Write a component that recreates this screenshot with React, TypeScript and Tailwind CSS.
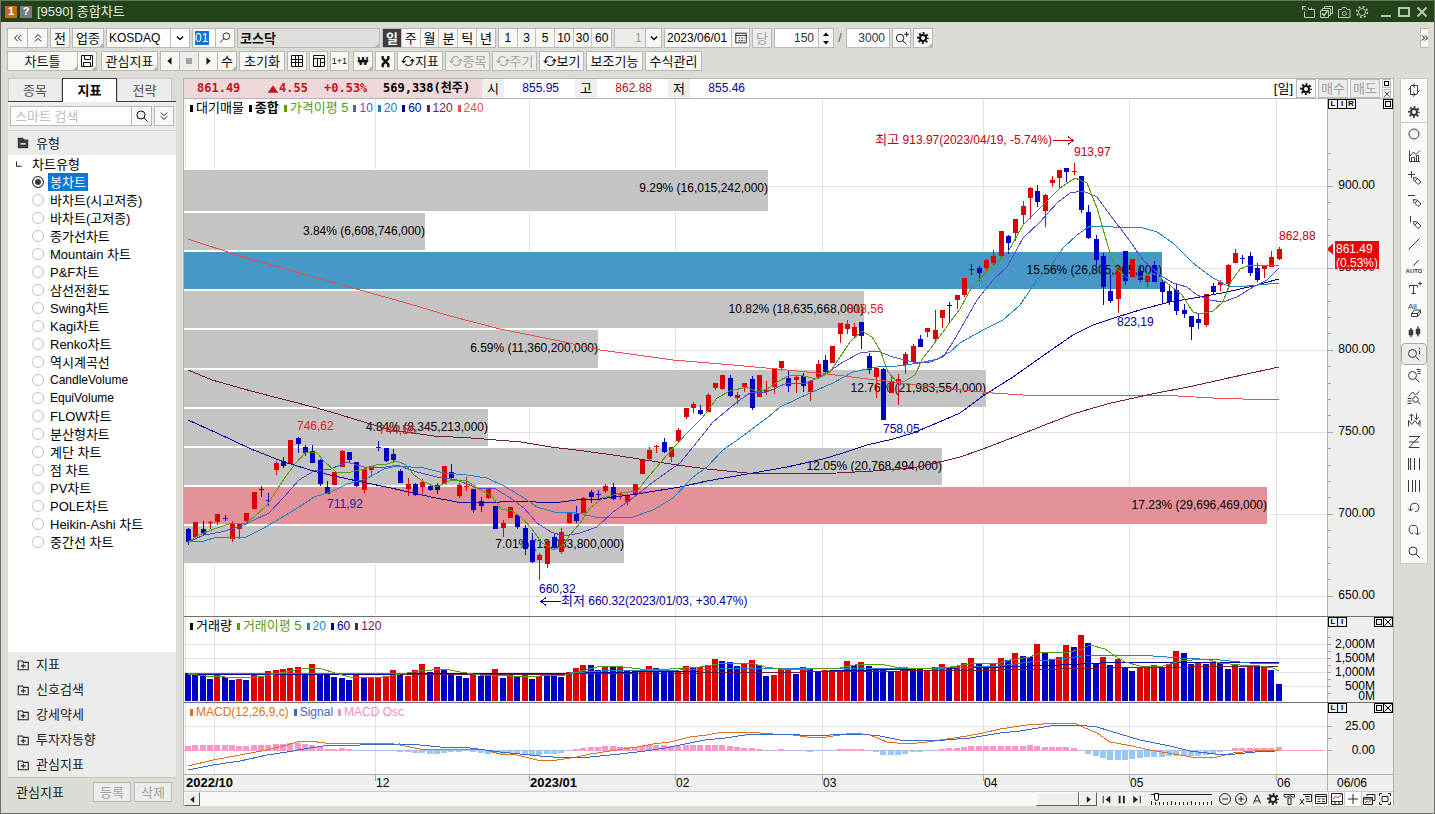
import { useState, type ReactNode } from "react";

type Candle = [up: number, high: number, top: number, bottom: number, low: number];

const RED = "#dc0000";
const BLUE = "#0000c4";

// Candles are kept in thirds of a pixel, counted from `base`.
const CANDLE_BLOCKS: { base: number; rows: Candle[] }[] = [
  {
    base: 380,
    rows: [
      [0, 444, 448, 487, 495], [1, 426, 426, 472, 472], [0, 424, 447, 462, 465], [1, 424, 427, 430, 446],
      [1, 402, 402, 426, 434], [0, 404, 413, 416, 424], [1, 424, 431, 477, 486], [1, 430, 432, 446, 476],
      [1, 398, 399, 422, 428], [1, 336, 336, 387, 387], [0, 318, 327, 330, 350], [0, 340, 360, 363, 378],
      [1, 243, 249, 269, 284], [0, 232, 243, 257, 263], [1, 180, 180, 252, 252], [0, 170, 174, 192, 218],
      [0, 195, 201, 219, 228], [0, 195, 213, 248, 248], [0, 236, 240, 312, 318], [0, 304, 320, 343, 343],
      [1, 277, 277, 315, 315], [1, 210, 213, 260, 260], [0, 216, 216, 240, 248], [0, 246, 246, 318, 322],
      [1, 266, 266, 330, 340], [1, 257, 257, 271, 290], [0, 183, 200, 203, 212], [0, 205, 205, 243, 246],
      [0, 208, 222, 240, 250], [0, 268, 273, 308, 308], [1, 293, 312, 327, 347], [0, 308, 312, 345, 348],
      [1, 298, 307, 320, 342], [0, 312, 319, 330, 333], [0, 308, 315, 330, 342], [1, 258, 258, 313, 313],
      [0, 252, 275, 293, 299], [1, 308, 315, 347, 353], [1, 291, 317, 320, 332], [0, 327, 327, 389, 400],
      [0, 352, 362, 378, 396], [1, 327, 327, 353, 356], [0, 378, 378, 447, 447], [1, 420, 429, 444, 472],
      [1, 380, 380, 415, 415], [0, 402, 406, 441, 448], [0, 436, 444, 506, 524], [0, 459, 480, 546, 549],
      [1, 518, 524, 541, 600], [1, 482, 484, 552, 563], [0, 458, 471, 504, 510], [1, 445, 457, 515, 522],
      [1, 396, 396, 429, 432], [0, 378, 402, 423, 428],
    ],
  },
  {
    base: 300,
    rows: [
      [1, 592, 595, 638, 638], [0, 571, 576, 590, 608], [0, 570, 582, 585, 600], [1, 552, 558, 573, 578],
      [0, 549, 561, 596, 600], [1, 575, 583, 586, 600], [1, 582, 585, 605, 615], [1, 552, 552, 583, 583],
      [1, 480, 480, 522, 522], [1, 440, 450, 476, 480], [1, 434, 438, 441, 458], [0, 414, 426, 456, 460],
      [1, 441, 441, 470, 486], [1, 384, 390, 422, 428], [1, 324, 324, 351, 357], [1, 306, 312, 323, 340],
      [0, 316, 330, 342, 346], [1, 279, 285, 335, 335], [1, 248, 250, 263, 270], [1, 225, 225, 267, 271],
      [0, 224, 234, 288, 291], [1, 276, 285, 293, 311], [1, 248, 250, 262, 276], [0, 228, 237, 323, 330],
      [1, 225, 225, 290, 290], [1, 244, 271, 275, 286], [1, 205, 205, 262, 282], [1, 183, 183, 204, 214],
      [0, 213, 234, 258, 277], [1, 228, 230, 240, 280], [0, 218, 228, 257, 277], [1, 240, 243, 275, 302],
      [1, 180, 192, 230, 230], [0, 165, 180, 215, 218], [1, 138, 138, 188, 188], [1, 68, 70, 101, 130],
      [1, 60, 72, 86, 102], [1, 68, 81, 107, 117], [0, 66, 66, 107, 147], [0, 158, 168, 209, 222],
      [1, 200, 204, 230, 294], [0, 203, 206, 359, 359], [1, 225, 244, 279, 279], [1, 222, 237, 250, 316],
      [1, 155, 162, 196, 222], [1, 132, 138, 185, 192], [0, 105, 117, 140, 140], [1, 84, 85, 97, 112],
      [1, 30, 90, 117, 122], [1, 30, 30, 54, 84], [0, 6, 14, 17, 66],
    ],
  },
  {
    base: 120,
    rows: [
      [1, 525, 525, 539, 567], [1, 474, 474, 525, 532], [0, 432, 446, 449, 465], [0, 438, 444, 459, 483],
      [1, 417, 420, 444, 458], [1, 390, 408, 429, 435], [1, 333, 333, 408, 415], [0, 345, 348, 369, 402],
      [1, 297, 297, 338, 364], [1, 242, 258, 284, 311], [1, 201, 204, 233, 298], [0, 195, 213, 245, 260],
      [1, 222, 225, 272, 320], [1, 167, 180, 188, 200], [1, 150, 150, 174, 204], [0, 144, 144, 156, 186],
      [1, 129, 152, 155, 164], [0, 168, 168, 270, 278], [0, 255, 276, 353, 356], [0, 345, 357, 420, 434],
      [0, 400, 408, 500, 555], [0, 462, 513, 543, 549], [1, 440, 444, 536, 578], [0, 393, 393, 482, 496],
      [1, 417, 417, 471, 471], [0, 440, 453, 480, 486], [1, 460, 468, 486, 500], [0, 423, 436, 486, 486],
      [0, 478, 486, 516, 551], [0, 497, 513, 547, 555], [0, 490, 510, 572, 584], [0, 552, 570, 581, 594],
      [0, 588, 588, 621, 660], [0, 582, 597, 608, 627], [1, 522, 522, 614, 620], [0, 488, 498, 516, 525],
      [1, 480, 487, 496, 512], [1, 432, 435, 492, 507], [1, 387, 399, 428, 428], [0, 405, 414, 418, 432],
      [0, 396, 408, 458, 467], [0, 430, 444, 479, 486], [1, 436, 438, 446, 474], [1, 393, 411, 440, 440],
      [1, 381, 387, 416, 420],
    ],
  },
];

const candles = CANDLE_BLOCKS.flatMap(({ base, rows }) =>
  rows.map(([up, ...ys]) => {
    const [high, top, bottom, low] = ys.map((v) => Math.round(base + v / 3));
    return { up: up === 1, high, top, bottom, low };
  }),
);

// negative = falling day
const VOLUME = [
  -28, -26, -26, -22, 27, -24, -21, 22, -21, 26, 25, 30, 31, 32, 33, 34, -28, 37, -26, -26, -24, -23, -21, 28, -23,
  23, 24, 25, 31, -28, 25, 31, 37, -29, 34, -31, -28, -25, -23, 27, -25, -25, 32, -23, 26, -24, 28, -22, 25, -25,
  -25, -24, 29, 33, 36, -36, -31, 35, -34, 34, -30, -30, 29, 35, -33, -31, -29, 30, 35, -33, 34, 36, 42, -40, -39,
  -35, 37, 41, -36, -25, 26, 32, 32, -27, 34, -33, -29, 31, 31, 31, 40, -36, 39, -35, -33, -32, -30, 30, 31, -32,
  -32, 31, 34, 37, -33, 35, 38, 43, -37, -34, 37, 43, -41, 48, -45, -44, 57, -49, -42, 44, 56, -54, 66, -58, -38,
  44, -36, 42, -33, -30, 33, 34, 36, -33, 37, 50, -48, -37, 38, -37, 39, -38, -32, 36, -33, 36, -35, 35, -31, -17,
];

const OSC = [
  4, 5, 5, 5, 5, 5, 5, 4, 4, 5, 5, 5, 6, 6, 7, 7, 6, 5, 3, 1, 1, 2, 1, 0, 0,
  0, 0, 0, 0, -2, -2, -3, -3, -4, -4, -3, -2, -2, -1, -2, -3, -4, -3, -4, -3, -4, -4, -5, -5, -4,
  -4, -3, 0, 1, 2, 3, 3, 4, 4, 3, 3, 3, 4, 5, 5, 5, 4, 4, 5, 5, 5, 5, 5, 5, 4,
  3, 2, 2, 1, 0, 0, 1, 0, -1, -1, -2, -1, -1, -1, 1, 1, 1, 1, -1, -2, -5, -5, -5, -4, -2,
  -2, -1, 0, 1, 2, 2, 3, 4, 4, 4, 4, 4, 4, 4, 4, 5, 4, 3, 3, 3, 3, 2, 0, -4, -6,
  -8, -10, -10, -10, -9, -8, -7, -7, -7, -6, -6, -6, -6, -6, -5, -4, -2, 0, 2, 2, 2, 2, 2, 2, 3,
];

const PRICE_LINES = [
  { color: "#e85050", points: "188,239 240,256 300,273 360,290 410,304 450,316 500,329 560,341 600,350 623,353 673,360 733,365 787,370 827,374 860,378 893,382 943,388 993,393 1023,395 1113,395 1160,395 1213,398 1243,399 1279,399" },
  { color: "#701c40", points: "188,370 212,380 251,391 317,408 341,415 377,426 391,430 434,436 471,438 521,442 551,447 584,451 620,456 677,465 707,469 747,473 793,474 837,473 873,471 913,468 940,462 960,457 983,449 1027,432 1073,414 1107,404 1147,395 1193,386 1233,377 1279,367" },
  { color: "#0000a0", points: "188,420 217,433 251,449 284,462 317,472 357,481 391,488 431,497 457,502 484,503 517,501 554,503 584,499 600,499 637,494 680,487 707,481 753,473 787,467 823,459 843,453 867,445 893,439 913,433 937,423 960,413 983,396 1013,377 1047,353 1073,335 1093,325 1117,317 1143,309 1170,302 1200,297 1227,292 1253,286 1279,279" },
  { color: "#2080c8", points: "188,542 204,541 217,537 246,537 262,529 281,518 299,507 314,497 331,492 347,484 366,479 384,469 397,466 424,468 444,473 467,475 487,478 504,486 521,496 537,507 554,512 577,513 600,518 633,517 653,510 673,498 693,477 707,467 723,450 747,433 767,418 780,407 810,393 833,383 853,372 877,367 897,366 920,363 937,359 950,352 960,343 983,330 1003,320 1020,305 1037,280 1050,267 1063,248 1077,235 1090,226 1113,227 1140,227 1157,232 1173,243 1193,263 1213,278 1230,287 1247,286 1279,283" },
  { color: "#5a48d8", points: "188,542 204,535 221,532 239,527 254,520 269,513 284,497 299,480 314,471 331,469 347,462 364,467 381,468 397,465 417,472 437,477 457,480 477,488 494,488 509,497 524,508 537,523 551,532 564,536 580,533 597,527 613,512 633,498 653,482 680,463 693,447 713,422 737,402 750,393 767,392 787,383 807,383 827,373 843,362 860,353 877,351 893,357 913,362 930,362 943,357 953,342 977,300 993,280 1007,267 1023,238 1040,222 1057,203 1070,193 1083,191 1097,197 1110,215 1127,237 1143,260 1160,275 1173,283 1187,287 1197,295 1210,300 1223,302 1237,297 1253,287 1267,280 1279,268" },
  { color: "#559c10", points: "188,542 199,535 214,529 232,523 246,523 254,517 267,505 284,479 296,463 306,452 317,453 324,461 336,472 351,472 364,469 376,465 387,464 397,461 406,465 414,475 424,482 437,487 451,480 467,481 479,489 492,496 501,509 512,511 521,517 532,529 542,543 554,550 562,546 570,535 580,523 590,508 603,498 620,493 637,491 650,475 667,455 687,433 703,417 717,398 730,391 747,387 757,392 767,389 777,382 790,375 803,376 817,379 830,372 840,357 850,342 862,331 872,337 880,350 888,372 897,382 905,381 915,375 923,358 937,340 948,325 960,309 973,285 992,267 1008,252 1023,225 1040,208 1060,188 1075,178 1087,183 1097,208 1107,243 1115,267 1127,278 1140,277 1153,273 1167,283 1182,295 1193,312 1200,314 1213,311 1223,302 1230,283 1240,269 1250,265 1267,265 1279,265" },
];

const VOLUME_LINES = [
  { color: "#701c40", points: "188,673 400,674 570,674 700,673 1000,670 1060,669 1100,668 1279,666" },
  { color: "#0000a0", points: "188,675 400,674 570,673 700,671 830,671 1000,667 1060,665 1100,663 1279,662" },
  { color: "#2080c8", points: "188,673 350,674 400,673 570,673 600,671 680,670 750,668 920,669 1000,666 1030,662 1060,659 1090,655 1140,655 1180,658 1220,660 1250,663 1279,664" },
  { color: "#559c10", points: "188,674 205,676 225,677 245,678 265,676 280,673 295,670 310,668 322,669 335,673 350,677 385,677 400,674 420,671 445,669 460,672 480,675 510,676 540,676 565,675 582,671 597,667 615,666 640,669 670,669 700,667 725,663 750,663 765,667 780,669 810,669 840,668 860,664 880,664 895,667 920,669 950,667 970,664 1000,663 1010,660 1030,657 1043,652 1065,653 1082,649 1090,645 1105,649 1115,656 1125,662 1140,666 1160,667 1180,661 1205,659 1220,663 1240,665 1260,666 1273,668 1279,671" },
];

const MACD_LINES = [
  { color: "#e07020", points: "188,766 213,760 240,755 267,750 287,745 297,742 310,741 325,743 347,743 367,744 387,743 400,745 420,749 443,749 470,749 485,750 500,754 517,755 537,760 557,760 577,757 590,754 610,751 637,747 653,744 670,742 690,737 707,735 723,732 747,732 773,734 793,735 807,737 827,737 840,735 853,733 870,735 887,742 907,744 927,742 947,739 967,736 983,733 1000,729 1027,725 1060,723 1077,724 1083,727 1097,733 1110,742 1127,745 1150,750 1180,755 1197,758 1217,757 1233,753 1253,751 1279,750" },
  { color: "#3868c8", points: "188,770 213,765 240,761 267,755 287,752 310,748 330,745 360,745 400,744 420,745 440,747 470,748 485,750 500,752 520,754 540,756 565,758 590,757 620,754 645,751 665,748 685,744 705,740 725,738 745,735 770,734 800,735 830,735 860,734 880,736 900,740 920,741 945,740 970,738 1000,733 1020,731 1050,726 1077,725 1097,727 1110,731 1140,740 1170,746 1190,751 1215,754 1235,754 1255,752 1275,751" },
];

const BANDS = [
  { y: 170, h: 41, right: 768, label: "9.29% (16,015,242,000)", fill: "#c4c4c4" },
  { y: 213, h: 37, right: 425, label: "3.84% (6,608,746,000)", fill: "#c4c4c4" },
  { y: 252, h: 37, right: 1162, label: "15.56% (26,805,205,000)", fill: "#4798c6" },
  { y: 291, h: 37, right: 864, label: "10.82% (18,635,668,000)", fill: "#c4c4c4" },
  { y: 330, h: 38, right: 598, label: "6.59% (11,360,200,000)", fill: "#c4c4c4" },
  { y: 370, h: 37, right: 986, label: "12.76% (21,983,554,000)", fill: "#c4c4c4" },
  { y: 409, h: 37, right: 488, label: "4.84% (8,345,213,000)", fill: "#c4c4c4" },
  { y: 448, h: 37, right: 942, label: "12.05% (20,768,494,000)", fill: "#c4c4c4" },
  { y: 487, h: 37, right: 1267, label: "17.23% (29,696,469,000)", fill: "#e49299" },
  { y: 526, h: 37, right: 624, label: "7.01% (12,083,800,000)", fill: "#c4c4c4" },
];

const PEAKS = [
  { x: 297, y: 430, text: "746,62", fill: "#e02020" },
  { x: 379, y: 434, text: "744,56", fill: "#e02020" },
  { x: 327, y: 508, text: "711,92", fill: "#2020c0" },
  { x: 539, y: 593, text: "660,32", fill: "#0000a0" },
  { x: 847, y: 313, text: "818,56", fill: "#e02020" },
  { x: 883, y: 433, text: "758,05", fill: "#0000a0" },
  { x: 1074, y: 156, text: "913,97", fill: "#c00010" },
  { x: 1117, y: 326, text: "823,19", fill: "#0000a0" },
  { x: 1279, y: 240, text: "862,88", fill: "#c00010" },
];

const MONTHS = [
  { x: 214, label: "" },
  { x: 375, label: "12" },
  { x: 529, label: "2023/01" },
  { x: 675, label: "02" },
  { x: 822, label: "03" },
  { x: 983, label: "04" },
  { x: 1129, label: "05" },
  { x: 1276, label: "06" },
];

const CHART_TYPES = [
  "봉차트", "바차트(시고저종)", "바차트(고저종)", "종가선차트", "Mountain 차트", "P&F차트", "삼선전환도",
  "Swing차트", "Kagi차트", "Renko차트", "역시계곡선", "CandleVolume", "EquiVolume", "FLOW차트",
  "분산형차트", "계단 차트", "점 차트", "PV차트", "POLE차트", "Heikin-Ashi 차트", "중간선 차트",
];

const barX = (i: number) => Math.floor(188.4 + 7.3215 * i);

function Icon({ children, size = 16, className = "" }: { children: ReactNode; size?: number; className?: string }) {
  return (
    <svg width={size} height={size} viewBox="0 0 16 16" fill="none" stroke="currentColor" className={`shrink-0 ${className}`} aria-hidden="true">
      {children}
    </svg>
  );
}

const gear = (
  <>
    <circle cx="8" cy="8" r="3" strokeWidth="2" />
    <circle cx="8" cy="8" r="4.9" strokeWidth="2" strokeDasharray="1.95 1.9" strokeDashoffset="1" />
  </>
);
const lens = (
  <>
    <circle cx="7" cy="7" r="4" />
    <path d="M9.8 9.8l4 4" />
  </>
);
const pencil = <path d="M7.5 7.5l3.5.5 4 4-3 2.5-4-4zM9 11l2.500-2.500" />;
const cycle = <path d="M3 10V7.5A4.5 4.5 0 0 1 11 4.500M13 6v2.500A4.5 4.5 0 0 1 5 11.500M.8 7.5L3 10l2.2-2.500M10.8 8.500L13 6l2.2 2.500" strokeWidth="1.2" />;
const smallLens = (
  <>
    <circle cx="6.5" cy="7.5" r="4" />
    <path d="M9.3 10.3l4 4" />
  </>
);

const TOOLS: { label: string; icon: ReactNode }[] = [
  { label: "새로고침", icon: <path d="M4.5 9.5V5a1.500 1.500 0 0 1 1.500-1.500h5.500V7M9 5.500L6.500 3.500 9 1.500M11.500 6.500V11a1.500 1.500 0 0 1-1.500 1.500H4.500V9M7 10.500l2.500 2L7 14.500M2.500 7.500l2-2M13.500 8.500l-2 2" /> },
  { label: "설정", icon: gear },
  { label: "원", icon: <circle cx="8" cy="8" r="5" /> },
  { label: "지표추가", icon: <path d="M3.5 2.5v11h10.5M4 8l3.5-4 2.5 2.5 4-4M5.5 13.5v-4h3v4M10.5 13.5v-6h2v6" /> },
  { label: "십자선", icon: <><path d="M2 4.5h7M5.5 1v7" />{pencil}</> },
  { label: "수평선", icon: <><path d="M2 3.5h7" />{pencil}</> },
  { label: "수직선", icon: <><path d="M4.5 2v6.5" />{pencil}</> },
  { label: "추세선", icon: <path d="M2.5 13.5l11-11" /> },
  { label: "자동추세선", icon: <><path d="M7.5 8l5-6" /><text x="8" y="15" fontSize="6" textAnchor="middle" fill="currentColor" stroke="none" fontWeight="bold">AUTO</text></> },
  { label: "문자", icon: <path d="M3.5 7.5v-2h8v2M7.5 5.5v8M5.5 13.5h4M12 3.500h4M14 1.5v4" /> },
  { label: "전체삭제", icon: <><text x="2" y="7" fontSize="8" fill="currentColor" stroke="none">All</text><path d="M5.5 11.5l3-3.5h6l-3 3.5zM5.5 11.5v3h6l3-3.5V8M11.5 11.5v3" /></> },
  { label: "봉모양", icon: <path d="M3.500 6.5h3v4h-3zM10.500 5.500h3v4h-3zM5 4v9M12 2.500v10" fill="currentColor" strokeWidth="1.5" /> },
  { label: "정보보기", icon: <>{smallLens}<path d="M13.5 4.5v4M13.5 2v1.2" /></> },
  { label: "목록보기", icon: <>{smallLens}<path d="M10.5 1.500h4M11.500 3.5h3M11.5 5.5h3" /></> },
  { label: "패턴검색", icon: <><path d="M2.5 6.500l4-4.500 3 3 4-3.5M1.5 8.500h4M1.5 11h4M1.5 13.5h4" /><circle cx="9.5" cy="9.5" r="2.8" /><path d="M11.5 11.5l3 2.5" /></> },
  { label: "신호", icon: <path d="M2.5 14.500V8.500l3.5 4 3-4 3 4 2-4v6M5.5 9V2M3.5 4l2-2 2 2M10.5 1.5v6M8.5 5.5l2 2 2-2" /> },
  { label: "지그재그", icon: <path d="M3 2.500h10.5L3 13.500h10.5M3 8h10" /> },
  { label: "피보나치", icon: <path d="M2.5 2v12M4.5 2v12M8.5 2v12M13.5 2v12" /> },
  { label: "등간격선", icon: <path d="M2.5 2v12M6.5 2v12M9.5 2v12M13.5 2v12" /> },
  { label: "되돌리기", icon: <path d="M4.5 11V7.500a4.200 4.200 0 1 1 4.500 4.200M2 8.500l2.500 2.500L7 8.500" /> },
  { label: "다시실행", icon: <path d="M11.5 12.500V7.500a4.200 4.200 0 1 0-4.500 4.200M9 10.500l2.500 2.500 2.500-2.500" /> },
  { label: "확대", icon: lens },
];

const BOTTOM_TOOLS: { label: string; icon: ReactNode; framed?: boolean }[] = [
  { label: "축소", icon: <><circle cx="8" cy="8" r="5.5" /><path d="M5 8h6" /></> },
  { label: "확대", icon: <><circle cx="8" cy="8" r="5.5" /><path d="M5 8h6M8 5v6" /></> },
  { label: "글자", icon: <path d="M4.5 12.500L8 4l3.5 8.500M5.5 10h5" /> },
  { label: "설정", icon: gear },
  { label: "도구", icon: <path d="M3 3.5h10.5V6h-2L10 5H8L5 6.5 3 5zM7 7h3v6.5H7z" /> },
  { label: "자료저장", icon: <path d="M6 3.5h8.5v7H9M3 8l4 5.5M7 8l-4 5.5M8 5.5h4.5M9 8h3.5" /> },
  { label: "표", icon: <path d="M2.5 3.5h11v9h-11zM2.5 5.5h11M4.5 8h3M4.5 10.5h3M9 8h3M9 10.5h3" />, framed: true },
  { label: "미니차트", icon: <><path d="M2.5 2.500h11v11h-11zM2.500 10.500h11M6 10.500v3M10 10.500v3" /><path d="M4 8l2.500-3 2 2 4-3.500" stroke="#c03030" /></>, framed: true },
  { label: "십자", icon: <path d="M8 3v10M3 8h10" />, framed: true },
  { label: "복사", icon: <><path d="M6 5V3.500h8v6h-2M2.500 6.500h9v7h-9zM2.500 8h9" /><path d="M4 12l2-2 1.500 1.500 2.500-2.500" stroke="#c03030" /></> },
  { label: "전체화면", icon: <path d="M5 5.500h6v5H5zM2.500 5V2.500H5M11 2.500h2.500V5M13.500 11v2.500H11M5 13.500H2.500V11" /> },
];

type BtnProps = { children?: ReactNode; label?: string; className?: string; more?: boolean; off?: boolean };

function Btn({ children, label, className = "", more, off }: BtnProps) {
  return (
    <button
      type="button"
      aria-label={label}
      disabled={off}
      className={`relative flex h-5 shrink-0 items-center justify-center whitespace-nowrap border border-[#b9b9b6] text-[13px] leading-none ${off ? "bg-[#ececea] text-[#a2a2a2]" : "bg-[#f7f7f6] text-[#111]"} ${className}`}
    >
      {children}
      {more && <span className="absolute bottom-0 right-0 border-2 border-b-[#b4b4b4] border-l-transparent border-r-[#b4b4b4] border-t-transparent" />}
    </button>
  );
}

function Chevron() {
  return (
    <Icon size={10}>
      <path d="M3 5.5l5 5 5-5" strokeWidth="2" />
    </Icon>
  );
}

function TitleBar() {
  return (
    <header className="flex h-[22px] items-center border-t border-[#5f7a58] bg-[#23441b] px-1 text-[#e8ece6]">
      <span className="flex size-3 items-center justify-center bg-[#c86a10] text-[11px] font-bold leading-none text-white">1</span>
      <span className="ml-[3px] flex size-3 items-center justify-center bg-[#7c7c7c] text-[11px] font-bold leading-none text-white">?</span>
      <h1 className="ml-[5px] text-[13px] leading-none">[9590] 종합차트</h1>
      <div className="ml-auto flex items-center gap-0.5 text-[#b9c6b2]">
        <button type="button" aria-label="창 분리"><Icon><path d="M4.500 7.500v6h10v-8h-6M8.500 3.500v2M11.500 5.500v-2M2 2.500l4 4M2.500 6V2.500H6" /></Icon></button>
        <button type="button" aria-label="창 복제"><Icon><path d="M2.5 6.5h8v7h-8zM4.500 6.500v-2h8v7h-2M6.500 4.500v-2h8v7h-2" /><path d="M4 9l2 2.500L9.500 7" strokeWidth="1.500" /></Icon></button>
        <button type="button" aria-label="화면 캡처"><Icon><path d="M2.500 5.500h3l1-2H10l1 2h3v8H2.500z" /><circle cx="8.300" cy="9.500" r="2" /></Icon></button>
        <button type="button" aria-label="설정"><Icon><circle cx="8" cy="8" r="3.5" /><circle cx="8" cy="8" r="5.3" strokeWidth="1.8" strokeDasharray="1.9 2.26" /></Icon></button>
        <button type="button" aria-label="최소화" className="ml-1.5"><Icon><path d="M3 12h10" strokeWidth="2" /></Icon></button>
        <button type="button" aria-label="최대화"><Icon><path d="M3 4h10v8H3z" strokeWidth="2" /></Icon></button>
        <button type="button" aria-label="닫기"><Icon><path d="M3.5 3.5l9 9M12.5 3.5l-9 9" strokeWidth="2" /></Icon></button>
      </div>
    </header>
  );
}

function Toolbar() {
  const [period, setPeriod] = useState("일");
  return (
    <div className="flex flex-col gap-[3px] pl-1.5 pt-1.5">
      <div className="flex gap-0.5">
        <div className="flex">
          <Btn label="처음" className="w-[21px]"><Icon size={10}><path d="M7.5 3l-5 5 5 5M13.5 3l-5 5 5 5" strokeWidth="1.5" /></Icon></Btn>
          <Btn label="접기" className="w-5 border-l-0"><Icon size={10}><path d="M3 7.5l5-5 5 5M3 13.5l5-5 5 5" strokeWidth="1.5" /></Icon></Btn>
        </div>
        <Btn className="w-5">전</Btn>
        <Btn className="w-8" more>업종</Btn>
        <div className="relative flex h-5 w-[84px] shrink-0 border border-[#b9b9b6] bg-white">
          <select aria-label="시장" className="w-full appearance-none bg-white pl-0.5 text-xs outline-none">
            <option>KOSDAQ</option>
          </select>
          <span className="pointer-events-none absolute inset-y-0 right-0 flex w-[19px] items-center justify-center border-l border-[#b9b9b6]"><Chevron /></span>
        </div>
        <div className="flex">
          <div className="flex h-5 w-6 items-center border border-[#b9b9b6] bg-white pl-0.5">
            <input aria-label="업종코드" defaultValue="01" className="h-3.5 w-3.5 bg-[#0a74d0] text-xs leading-none text-white outline-none" />
          </div>
          <Btn label="코드 검색" className="w-[19px] border-l-0"><Icon size={14}><circle cx="9.5" cy="6" r="3.8" /><path d="M6.8 8.7L2.5 13" /></Icon></Btn>
        </div>
        <Btn className="w-[143px] justify-start! bg-[#dfdedb]! pl-0.5 font-bold" more>코스닥</Btn>
        <div className="flex h-5 w-[114px] shrink-0 divide-x divide-[#c4c4c2] border border-[#b9b9b6] bg-[#f7f7f6] text-[13px] leading-none">
          {["일", "주", "월", "분", "틱", "년"].map((p) => (
            <button key={p} type="button" onClick={() => setPeriod(p)} className={p === period ? "flex-1 bg-[#3e3e3e] font-bold text-white" : "flex-1"}>
              {p}
            </button>
          ))}
        </div>
        <div className="flex h-5 w-[114px] shrink-0 divide-x divide-[#c4c4c2] border border-[#b9b9b6] bg-[#f7f7f6] text-xs leading-none">
          {["1", "3", "5", "10", "30", "60"].map((n) => (
            <button key={n} type="button" className="w-[19px] grow">{n}</button>
          ))}
        </div>
        <div className="relative flex h-5 w-12 shrink-0 border border-[#b9b9b6] bg-[#ececea]">
          <select aria-label="분 단위" className="w-full appearance-none bg-transparent pl-5 text-xs text-[#999] outline-none">
            <option>1</option>
          </select>
          <span className="pointer-events-none absolute inset-y-0 right-0 flex w-4 items-center justify-center border-l border-[#b9b9b6] bg-[#f7f7f6]"><Chevron /></span>
        </div>
        <div className="flex">
          <input aria-label="기준일" defaultValue="2023/06/01" className="h-5 w-[68px] border border-[#b9b9b6] bg-white pl-0.5 text-xs outline-none" />
          <Btn label="달력" className="w-[18px] border-l-0"><Icon size={14}><path d="M2 2.5h12v11H2zM2 5h12M5 8h2M8 8h2M11 8h1M5 11h2M8 11h2M11 11h1" /></Icon></Btn>
        </div>
        <Btn className="w-5" off>당</Btn>
        <div className="flex">
          <input aria-label="표시 봉수" defaultValue="150" className="h-5 w-[45px] border border-[#b9b9b6] bg-white pr-1 text-right text-xs text-[#333] outline-none" />
          <div className="flex h-5 w-[15px] flex-col border border-l-0 border-[#b9b9b6] bg-[#f7f7f6]">
            <button type="button" aria-label="늘리기" className="flex flex-1 items-center justify-center"><Icon size={8}><path d="M2 12h12L8 5z" fill="currentColor" stroke="none" /></Icon></button>
            <button type="button" aria-label="줄이기" className="flex flex-1 items-center justify-center"><Icon size={8}><path d="M2 4h12l-6 7z" fill="currentColor" stroke="none" /></Icon></button>
          </div>
        </div>
        <span className="w-2 text-center text-xs leading-5 text-[#555]">/</span>
        <input aria-label="전체 봉수" defaultValue="3000" className="h-5 w-11 border border-[#b9b9b6] bg-white pr-1 text-right text-xs text-[#333] outline-none" />
        <Btn label="확대" className="w-[19px]"><Icon size={15}>{smallLens}<path d="M11 3.5h5M13.5 1v5" /></Icon></Btn>
        <Btn label="환경설정" className="w-5" more><Icon>{gear}</Icon></Btn>
        <button type="button" aria-label="더보기" className="ml-auto mr-1.5 flex h-5 w-2 items-center justify-center border-y border-l border-[#b9b9b6] bg-[#f7f7f6]">
          <Icon size={8}><path d="M2 3l5 5-5 5M8 3l5 5-5 5" strokeWidth="2" /></Icon>
        </button>
      </div>
      <div className="flex gap-0.5">
        <div className="mr-0.5 flex">
          <Btn className="w-[71px]" more>차트틀</Btn>
          <Btn label="저장" className="w-[19px] border-l-0" more><Icon><path d="M2.5 2.5h11v11h-11zM5.5 2.5v4h6v-4M4.5 13.5v-4h7v4" /></Icon></Btn>
        </div>
        <Btn className="w-[57px]" more>관심지표</Btn>
        <div className="flex">
          <Btn label="이전" className="w-5"><Icon size={12}><path d="M10 3v10L4.5 8z" fill="currentColor" stroke="none" /></Icon></Btn>
          <Btn label="정지" className="w-[19px] border-l-0" off><Icon size={12}><path d="M4 4h8v8H4z" fill="currentColor" stroke="none" /></Icon></Btn>
          <Btn label="다음" className="w-[19px] border-l-0"><Icon size={12}><path d="M6 3v10l5.5-5z" fill="currentColor" stroke="none" /></Icon></Btn>
          <Btn className="w-[19px] border-l-0" more>수</Btn>
        </div>
        <Btn className="w-[46px]">초기화</Btn>
        <Btn label="격자" className="w-5"><Icon><path d="M2.5 2.5h11v11h-11zM2.5 6.5h11M2.5 9.5h11M6.5 2.5v11M9.5 2.5v11" /></Icon></Btn>
        <Btn label="배치" className="w-[19px]"><Icon><path d="M2.5 2.5h11v11h-11zM2.5 5.5h11M6.5 5.5v8M9.5 5.5v8M9.5 9.5h4" /></Icon></Btn>
        <Btn className="w-[19px] text-[9px]!">1+1</Btn>
        <Btn label="원화" className="ml-0.5 w-5" more><span className="text-[11px] font-bold">₩</span></Btn>
        <Btn label="도구" className="w-5"><Icon size={15}><path d="M5 2v3l6 6v3M11 2v3L5 11v3" strokeWidth="2.5" /></Icon></Btn>
        <Btn className="w-[46px]"><Icon size={14}>{cycle}</Icon>지표</Btn>
        <Btn className="w-[45px]" off><Icon size={14}>{cycle}</Icon>종목</Btn>
        <Btn className="w-[45px]" off><Icon size={14}>{cycle}</Icon>주기</Btn>
        <Btn className="w-[45px]"><Icon size={14}>{cycle}</Icon>보기</Btn>
        <Btn className="w-[57px]">보조기능</Btn>
        <Btn className="w-[57px]">수식관리</Btn>
      </div>
    </div>
  );
}

function Sidebar() {
  const [selected, setSelected] = useState("봉차트");
  return (
    <aside className="flex w-[168px] shrink-0 flex-col bg-white">
      <div className="flex h-6 shrink-0 border-b border-[#3c3c3c] bg-[#dcdbd6] text-[13px] leading-none text-[#555]">
        <button type="button" className="w-[54px] border border-b-0 border-[#c8c8c6] bg-[#ececec]">종목</button>
        <button type="button" className="-mb-px w-[55px] border border-b-0 border-[#3c3c3c] bg-white font-bold text-black">지표</button>
        <button type="button" className="w-[55px] border border-b-0 border-[#c8c8c6] bg-[#ececec]">전략</button>
      </div>
      <div className="flex h-7 shrink-0 items-center gap-0.5 bg-[#ececea] px-0.5">
        <div className="flex">
          <input aria-label="스마트 검색" placeholder="스마트 검색" className="h-5 w-[122px] border border-[#b9b9b6] bg-white pl-1 text-[13px] outline-none placeholder:text-[#bdbdbd]" />
          <Btn label="검색" className="w-5 border-l-0"><Icon>{lens}</Icon></Btn>
        </div>
        <Btn label="펼치기" className="w-5"><Icon size={10}><path d="M3 2.5l5 5 5-5M3 8.5l5 5 5-5" strokeWidth="1.5" /></Icon></Btn>
      </div>
      <button type="button" className="flex h-[25px] shrink-0 items-center border-t border-[#d0d0ce] bg-[#ebebeb] pl-2 text-[13px] leading-none text-[#222]">
        <Icon size={14} className="text-[#3c3c3c]"><path d="M2 2h6l1.5 2H14v10H2z" fill="currentColor" stroke="none" /><path d="M5 9h6" stroke="white" strokeWidth="1.5" /></Icon>
        <span className="ml-1.5">유형</span>
      </button>
      <fieldset className="min-h-0 flex-1 overflow-hidden">
        <legend className="flex h-[18px] items-center pl-2 text-[13px] leading-none">
          <Icon size={6} className="mr-2.5"><path d="M1 1v13h14" strokeWidth="2.5" /></Icon>
          차트유형
        </legend>
        {CHART_TYPES.map((name) => (
          <label key={name} className="flex h-[18px] items-center pl-6 leading-none">
            <input
              type="radio"
              name="chart-type"
              checked={selected === name}
              onChange={() => setSelected(name)}
              className="size-3 appearance-none rounded-full border border-[#c2c2c2] bg-white checked:border-[#3a3a3a] checked:bg-[#3a3a3a] checked:shadow-[inset_0_0_0_2px_white]"
            />
            <span
              className={[
                "ml-1 flex h-[18px] items-center whitespace-nowrap px-0.5",
                /^[A-Za-z]+$/.test(name) ? "text-xs" : "text-[13px]",
                selected === name ? "bg-[#0078d7] text-white" : "text-black",
              ].join(" ")}
            >
              {name}
            </span>
          </label>
        ))}
      </fieldset>
      <div className="shrink-0 bg-[#ebebeb]">
        {["지표", "신호검색", "강세약세", "투자자동향", "관심지표"].map((name) => (
          <button key={name} type="button" className="flex h-[25px] w-full items-center pl-2 text-[13px] leading-none text-[#222]">
            <Icon size={14}><path d="M2.5 3.5h5l1 1.5h5.500v8.500H2.500zM5.500 9h5.500M8.200 6.300v5.500" strokeWidth="1.2" /></Icon>
            <span className="ml-1.5">{name}</span>
          </button>
        ))}
      </div>
      <div className="flex h-[29px] shrink-0 items-center gap-[3px] border-t border-[#c4c4c0] bg-[#dcdbd6] pl-2 pr-1">
        <span className="mr-auto text-[13px] leading-none text-[#222]">관심지표</span>
        <Btn className="w-[38px]" off>등록</Btn>
        <Btn className="w-[38px]" off>삭제</Btn>
      </div>
    </aside>
  );
}

function Legend({ items }: { items: { text: string; color: string; bold?: boolean }[] }) {
  return (
    <div className="absolute left-1.5 top-px flex gap-[5px] leading-4">
      {items.map((it) => (
        <span
          key={it.text}
          className={`flex items-center gap-[3px] whitespace-nowrap ${/[가-힣]/.test(it.text) ? "text-[13px]" : "text-xs"} ${it.bold ? "font-bold" : ""}`}
          style={{ color: it.color }}
        >
          <i className="h-[7px] w-[3px] bg-current" />
          {it.text}
        </span>
      ))}
    </div>
  );
}

function MiniBoxes({ items }: { items: string[] }) {
  return (
    <div className="flex">
      {items.map((t) => (
        <button key={t} type="button" aria-label={t} className="-ml-px flex h-2.5 w-2.5 items-center justify-center border border-black bg-[#f0f0f0] text-[8px] font-bold leading-none first:ml-0">
          {t === "□" ? <i className="size-1.5 border border-black" /> : t === "×" ? <Icon size={8}><path d="M1 1l14 14M15 1L1 15" strokeWidth="2" /></Icon> : t}
        </button>
      ))}
    </div>
  );
}

function PaneAxis({ left, right, children }: { left: string[]; right: string[]; children: ReactNode }) {
  return (
    <div className="relative w-[66px] shrink-0 border-l border-[#b0b0b0] bg-[#efefef]">
      {children}
      <div className="absolute inset-x-0 top-0 flex justify-between">
        <MiniBoxes items={left} />
        <MiniBoxes items={right} />
      </div>
    </div>
  );
}

function MonthGrid({ y1, y2 }: { y1: number; y2: number }) {
  return (
    <g stroke="#e2e2e2">
      <path d={`M185.5 ${y1}V${y2}`} />
      {MONTHS.map((m) => (
        <path key={m.x} d={`M${m.x + 0.5} ${y1}V${y2}`} />
      ))}
    </g>
  );
}

function Lines({ lines }: { lines: { color: string; points: string }[] }) {
  return lines.map((l) => <polyline key={l.color} points={l.points} fill="none" stroke={l.color} />);
}

function PricePane() {
  return (
    <div className="flex min-h-0 flex-1">
      <div className="relative min-w-0 flex-1 bg-white">
        <svg className="block size-full" fontSize="12" role="img" aria-label="코스닥 일봉 차트">
          <g transform="translate(-184 -99)" shapeRendering="crispEdges">
            <MonthGrid y1={99} y2={614} />
            {[186, 268, 350, 432, 514, 596].map((y) => (
              <path key={y} d={`M184 ${y}.5H1327`} stroke="#e2e2e2" />
            ))}
            {BANDS.map((b) => (
              <g key={b.y}>
                <rect x="184" y={b.y - 1} width={b.right - 183} height={b.h + 2} fill="white" />
                <rect x="184" y={b.y} width={b.right - 184} height={b.h} fill={b.fill} />
                <text x={b.right} y={b.y + 22} textAnchor="end">{b.label}</text>
              </g>
            ))}
            {candles.map((c, i) => {
              const x = barX(i);
              return (
                <g key={i} fill={c.up ? RED : BLUE}>
                  <rect x={x} y={c.high} width="1" height={Math.max(1, c.low - c.high)} />
                  <rect x={x - 2} y={c.top} width="5" height={Math.max(1, c.bottom - c.top)} />
                </g>
              );
            })}
            <Lines lines={PRICE_LINES} />
            {PEAKS.map((p) => (
              <text key={p.text} x={p.x} y={p.y} fill={p.fill}>{p.text}</text>
            ))}
            <text x="1052" y="144" textAnchor="end" fill="#c00010"><tspan fontSize="13">최고</tspan> 913.97(2023/04/19, -5.74%)</text>
            <path d="M1053 140.5h20M1068 136.5l5 4-5 4" fill="none" stroke="#c00010" />
            <text x="561" y="605" fill="#0000a0"><tspan fontSize="13">최저</tspan> 660.32(2023/01/03, +30.47%)</text>
            <path d="M561 601.5h-20M546 597.5l-5 4 5 4" fill="none" stroke="#0000a0" />
          </g>
        </svg>
        <Legend
          items={[
            { text: "대기매물", color: "#000" },
            { text: "종합", color: "#000", bold: true },
            { text: "가격이평 5", color: "#559c10" },
            { text: "10", color: "#6050d8" },
            { text: "20", color: "#2080c8" },
            { text: "60", color: "#0000a0" },
            { text: "120", color: "#701c40" },
            { text: "240", color: "#e85050" },
          ]}
        />
      </div>
      <PaneAxis left={["L", "I", "R"]} right={["□"]}>
        <svg className="block size-full" fontSize="12">
          <g transform="translate(-1328 -99)">
            {Array.from({ length: 28 }, (_, k) => Math.round(153 + k * 16.4)).map((y, k) => (
              <path key={y} d={`M1328 ${y}.5h${k % 5 === 2 ? 5 : 3}`} stroke="#a8a8a8" />
            ))}
            {["900.00", "850.00", "800.00", "750.00", "700.00", "650.00"].map((t, k) => (
              <text key={t} x="1375" y={189 + k * 82} textAnchor="end">{t}</text>
            ))}
            <path d="M1333 243.5v11l-6-5.5zM1335 241h44v28h-44z" fill="#f00000" />
            <text x="1336" y="253" fill="white">861.49</text>
            <text x="1336" y="267" fill="white">(0.53%)</text>
          </g>
        </svg>
      </PaneAxis>
    </div>
  );
}

function VolumePane() {
  return (
    <div className="flex h-[86px] shrink-0 border-t border-[#707070]">
      <div className="relative min-w-0 flex-1 bg-white">
        <svg className="block size-full" role="img" aria-label="거래량">
          <g transform="translate(-184 -617)" shapeRendering="crispEdges">
            <MonthGrid y1={617} y2={702} />
            {[644, 658, 672, 686].map((y) => (
              <path key={y} d={`M184 ${y}.5H1327`} stroke="#e2e2e2" />
            ))}
            {VOLUME.map((v, i) => (
              <rect key={i} x={barX(i) - 3} y={701 - Math.abs(v)} width="6" height={Math.abs(v)} fill={v > 0 ? RED : BLUE} />
            ))}
            <Lines lines={VOLUME_LINES} />
          </g>
        </svg>
        <Legend
          items={[
            { text: "거래량", color: "#000" },
            { text: "거래이평 5", color: "#559c10" },
            { text: "20", color: "#2080c8" },
            { text: "60", color: "#0000a0" },
            { text: "120", color: "#701c40" },
          ]}
        />
      </div>
      <PaneAxis left={["L", "I"]} right={["□", "×"]}>
        <svg className="block size-full" fontSize="12">
          <g transform="translate(-1328 -617)">
            {[637, 644, 651, 658, 665, 672, 679, 686, 693].map((y) => (
              <path key={y} d={`M1328 ${y}.5h3`} stroke="#a8a8a8" />
            ))}
            {[["2,000M", 648], ["1,500M", 662], ["1,000M", 676], ["500M", 690], ["0M", 700]].map(([t, y]) => (
              <text key={t} x="1375" y={y} textAnchor="end">{t}</text>
            ))}
          </g>
        </svg>
      </PaneAxis>
    </div>
  );
}

function MacdPane() {
  return (
    <div className="flex h-[72px] shrink-0 border-t border-[#707070]">
      <div className="relative min-w-0 flex-1 bg-white">
        <svg className="block size-full" role="img" aria-label="MACD">
          <g transform="translate(-184 -703)" shapeRendering="crispEdges">
            <MonthGrid y1={703} y2={774} />
            <path d="M184 726.5H1327" stroke="#e2e2e2" />
            <path d="M184 750.5H1325" stroke="#f8a0c8" />
            {OSC.map((v, i) => (
              <rect key={i} x={barX(i) - 3} y={v > 0 ? 750 - v : 750} width="6" height={Math.abs(v) || 1} fill={v > 0 ? "#f898c8" : "#98c8f8"} />
            ))}
            <Lines lines={MACD_LINES} />
          </g>
        </svg>
        <Legend
          items={[
            { text: "MACD(12,26,9,c)", color: "#e07020" },
            { text: "Signal", color: "#3868c8" },
            { text: "MACD Osc", color: "#f090c0" },
          ]}
        />
      </div>
      <PaneAxis left={["L", "I"]} right={["□", "×"]}>
        <svg className="block size-full" fontSize="12">
          <g transform="translate(-1328 -703)">
            {[726, 738, 750].map((y) => (
              <path key={y} d={`M1328 ${y}.5h4`} stroke="#a8a8a8" />
            ))}
            <text x="1375" y="730" textAnchor="end">25.00</text>
            <text x="1375" y="754" textAnchor="end">0.00</text>
          </g>
        </svg>
      </PaneAxis>
    </div>
  );
}

function DateAxis() {
  return (
    <div className="flex h-[17px] shrink-0 border-t border-[#b0b0b0] bg-[#efefef] text-xs">
      <svg className="block h-full min-w-0 flex-1" fontSize="12">
        <g transform="translate(-184 -775)">
          <text x="186" y="787" fontSize="13" fontWeight="bold">2022/10</text>
          {MONTHS.filter((m) => m.label).map((m) => (
            <g key={m.x}>
              <path d={`M${m.x}.5 775v6`} stroke="#a8a8a8" />
              <text x={m.x + 1} y="787" fontSize={m.label.length > 2 ? 13 : 12} fontWeight={m.label.length > 2 ? "bold" : "normal"}>{m.label}</text>
            </g>
          ))}
        </g>
      </svg>
      <span className="w-[66px] shrink-0 border-l border-[#b0b0b0] pl-[9px] leading-4">06/06</span>
    </div>
  );
}

function BottomBar() {
  const raised = "flex h-3.5 items-center justify-center border border-b-[#606060] border-l-white border-r-[#606060] border-t-white bg-[#efefef]";
  return (
    <div className="flex h-[15px] shrink-0 items-center border-t border-[#c8c8c8] bg-[#f0f0f0] text-[#222]">
      <div className="flex h-3.5 min-w-0 flex-1 bg-[#f8f8f8]">
        <button type="button" aria-label="왼쪽" className={`${raised} w-4`}><Icon size={9}><path d="M11 2v12L4 8z" fill="currentColor" stroke="none" /></Icon></button>
        <div className="flex-1" />
        <div className={`${raised} w-[43px]`} />
        <button type="button" aria-label="오른쪽" className={`${raised} w-[18px]`}><Icon size={9}><path d="M5 2v12l7-6z" fill="currentColor" stroke="none" /></Icon></button>
      </div>
      <div className="flex h-3.5 items-center pl-0.5">
        <button type="button" aria-label="처음"><Icon size={15}><path d="M4.5 4v8" /><path d="M12 4v8L7 8z" fill="currentColor" stroke="none" /></Icon></button>
        <button type="button" aria-label="일시정지"><Icon size={15}><path d="M6 4v8M10.5 4v8" strokeWidth="2" /></Icon></button>
        <button type="button" aria-label="마지막"><Icon size={15}><path d="M12 4v8" /><path d="M4.5 4v8l5-4z" fill="currentColor" stroke="none" /></Icon></button>
      </div>
      <div className="relative ml-[7px] h-3.5 w-[62px]">
        <svg width="62" height="14" className="absolute inset-0" stroke="#222" shapeRendering="crispEdges" aria-hidden="true">
          <path d="M0 2.5h61" />
          {Array.from({ length: 16 }, (_, k) => (
            <path key={k} d={`M${k * 4}.5 13v-${k % 5 === 0 ? 4 : 3}`} />
          ))}
        </svg>
        <input
          type="range"
          aria-label="속도"
          defaultValue="5"
          className="absolute inset-x-0 top-0 h-2.5 w-full appearance-none bg-transparent [&::-webkit-slider-thumb]:h-2 [&::-webkit-slider-thumb]:w-[5px] [&::-webkit-slider-thumb]:appearance-none [&::-webkit-slider-thumb]:rounded-b-sm [&::-webkit-slider-thumb]:border [&::-webkit-slider-thumb]:border-black [&::-webkit-slider-thumb]:bg-white"
        />
      </div>
      <div className="ml-1 flex">
        {BOTTOM_TOOLS.map((t) => (
          <button key={t.label} type="button" aria-label={t.label} className={`flex h-3.5 w-4 items-center justify-center ${t.framed ? "bg-white outline outline-[#c8c8c8]" : ""}`}>
            <Icon>{t.icon}</Icon>
          </button>
        ))}
      </div>
    </div>
  );
}

function QuoteHeader() {
  return (
    <div className="flex h-5 shrink-0 border-b border-[#b4b4b4] bg-white text-xs leading-[19px]">
      <div className="flex w-[298px] shrink-0 bg-[#efd8da] pl-[13px] font-['DejaVu_Sans_Mono','Noto_Sans_CJK_KR',monospace] font-bold text-[#cc1018]">
        <span className="w-[70px]">861.49</span>
        <span className="flex w-[57px] items-center"><Icon size={12}><path d="M1 13h14L8 3z" fill="currentColor" stroke="none" /></Icon>4.55</span>
        <span className="w-[59px]">+0.53%</span>
        <span className="text-black">569,338(천주)</span>
      </div>
      {[
        { label: "시", value: "855.95", color: "text-[#0000a0]" },
        { label: "고", value: "862.88", color: "text-[#b01018]" },
        { label: "저", value: "855.46", color: "text-[#0000a0]" },
      ].map((q) => (
        <div key={q.label} className="flex w-[93px] shrink-0">
          <span className="w-[22px] bg-[#efefef] text-center text-[13px]">{q.label}</span>
          <span className={`w-[55px] text-right ${q.color}`}>{q.value}</span>
        </div>
      ))}
      <div className="ml-auto flex items-center gap-0.5 pr-0.5">
        <span className="mr-px text-[13px]">[일]</span>
        <Btn label="설정" className="h-[19px]! w-5"><Icon>{gear}</Icon></Btn>
        <Btn className="h-[19px]! w-[30px]" off>매수</Btn>
        <Btn className="h-[19px]! w-[30px]" off>매도</Btn>
        <div className="flex w-[9px] flex-col gap-px">
          <button type="button" aria-label="창 확대" className="flex h-[9px] items-center justify-center border border-[#b9b9b6]"><i className="size-[5px] border border-black" /></button>
          <button type="button" aria-label="창 닫기" className="flex h-[9px] items-center justify-center border border-[#b9b9b6]"><Icon size={6}><path d="M1 1l14 14M15 1L1 15" strokeWidth="2" /></Icon></button>
        </div>
      </div>
    </div>
  );
}

function ToolRail() {
  return (
    <nav className="w-7 shrink-0 self-start border border-[#c8c8c6] bg-[#fafafa] text-[#3a3a3a]">
      {TOOLS.map((t, i) => (
        <button
          key={t.label}
          type="button"
          aria-label={t.label}
          className={[
            "flex h-[22px] w-full items-center justify-center",
            i === 1 ? "border-b border-[#c8c8c6]" : "",
            t.label === "정보보기" ? "rounded border border-[#a8a8a8] bg-[#ececec]" : "",
          ].join(" ")}
        >
          <Icon>{t.icon}</Icon>
        </button>
      ))}
    </nav>
  );
}

export default function App() {
  return (
    <div className="flex h-screen flex-col overflow-hidden border-x border-b border-[#6e6e6a] bg-[#dcdbd6] font-['Liberation_Sans','Noto_Sans_CJK_KR',sans-serif] text-xs text-black">
      <TitleBar />
      <Toolbar />
      <div className="flex min-h-0 flex-1 pb-[7px] pl-[7px] pr-1.5 pt-[7px]">
        <Sidebar />
        <main className="ml-[7px] mr-1.5 flex min-w-0 flex-1 flex-col border-x border-t border-[#b4b4b4]">
          <QuoteHeader />
          <PricePane />
          <VolumePane />
          <MacdPane />
          <DateAxis />
          <BottomBar />
        </main>
        <ToolRail />
      </div>
    </div>
  );
}
